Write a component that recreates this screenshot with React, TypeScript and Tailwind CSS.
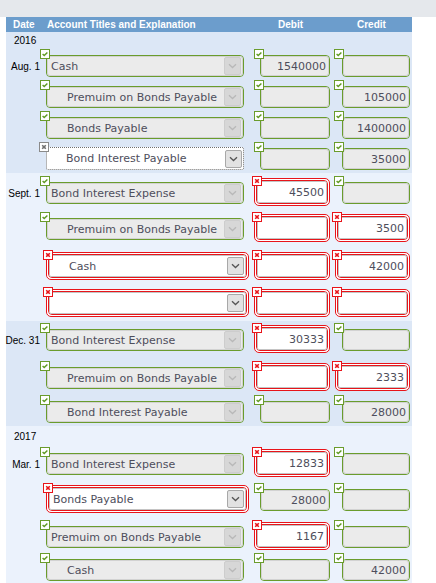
import React from 'react';

type St = 'g' | 'r' | 'n';
interface Row {
  h: string;
  date?: string;
  acct: string;
  indent: boolean;
  as: St;
  debit: string;
  ds: St;
  credit: string;
  cs: St;
}

const FONT_FIELD = "font-['DejaVu_Sans',Verdana,sans-serif]";

function CheckIcon({ pos }: { pos: string }) {
  return (
    <span className={`absolute z-10 block w-[10px] h-[10px] border border-[#6a9c2c] bg-white ${pos}`}>
      <svg width="8" height="8" viewBox="0 0 8 8" className="block">
        <path d="M1.6 4.1 L3.2 5.6 L6.4 2.4" fill="none" stroke="#5f9a22" strokeWidth="1.4" />
      </svg>
    </span>
  );
}

function XIcon({ pos, gray }: { pos: string; gray?: boolean }) {
  const c = gray ? '#707070' : '#e8141a';
  return (
    <span
      className={`absolute z-10 block w-[10px] h-[10px] border bg-white ${gray ? 'border-[#8a8a8a]' : 'border-[#e8141a]'} ${pos}`}
    >
      <svg width="8" height="8" viewBox="0 0 8 8" className="block">
        <path d="M2.2 2.2 L5.8 5.8 M5.8 2.2 L2.2 5.8" fill="none" stroke={c} strokeWidth="1.6" />
      </svg>
    </span>
  );
}

function Arrow({ active }: { active: boolean }) {
  return (
    <div
      className={
        active
          ? 'ml-auto mr-px h-[18px] w-[17px] shrink-0 flex items-center justify-center rounded-[2px] border border-[#a8a8a8] bg-[#e2e2e2]'
          : 'ml-auto mr-px h-[18px] w-[17px] shrink-0 flex items-center justify-center rounded-[2px] border border-[#cdcdcd] bg-[#d7d7d7]'
      }
    >
      <svg width="9" height="6" viewBox="0 0 9 6" className="block">
        <path d="M1 1.2 L4.5 4.5 L8 1.2" fill="none" stroke={active ? '#555555' : '#b8b8b8'} strokeWidth="1.3" />
      </svg>
    </div>
  );
}

function Content({
  text,
  num,
  indent,
  select,
  active,
}: {
  text: string;
  num: boolean;
  indent: boolean;
  select: boolean;
  active: boolean;
}) {
  if (num) {
    return (
      <span className={`ml-auto pr-[2px] text-[11px] leading-none text-[#4e4e5c] whitespace-nowrap ${FONT_FIELD}`}>
        {text}
      </span>
    );
  }
  return (
    <>
      <span
        className={`${indent ? 'pl-[19px]' : 'pl-[3px]'} text-[11px] leading-none text-[#4e4e5c] whitespace-nowrap ${FONT_FIELD}`}
      >
        {text}
      </span>
      {select && <Arrow active={active} />}
    </>
  );
}

function GreenField({ box, text, num, indent, select }: { box: string; text: string; num: boolean; indent: boolean; select: boolean }) {
  return (
    <div className={`${box} rounded-[4px] border border-[#6a9c2c]`}>
      <div className="h-full rounded-[3px] border border-[#d2d2d2] bg-[#ebebeb] flex items-center">
        <Content text={text} num={num} indent={indent} select={select} active={false} />
      </div>
    </div>
  );
}

function NeutralField({ box, text, indent }: { box: string; text: string; indent: boolean }) {
  return (
    <div className={`${box} rounded-[2px] border border-dotted border-[#6f6f6f] bg-white flex items-center`}>
      <Content text={text} num={false} indent={indent} select={true} active={true} />
    </div>
  );
}

function RedField({ box, text, num, indent, select }: { box: string; text: string; num: boolean; indent: boolean; select: boolean }) {
  return (
    <div className={`${box} rounded-[5px] border border-[#e8141a] bg-white p-px`}>
      <div className="h-full rounded-[4px] border border-[#e8141a]">
        <div className="h-full rounded-[2px] border border-[#c4c4c4] bg-white flex items-center">
          <Content text={text} num={num} indent={indent} select={select} active={true} />
        </div>
      </div>
    </div>
  );
}

function AcctCell({ r }: { r: Row }) {
  return (
    <div className="relative w-[212px] shrink-0">
      {r.as === 'g' && (
        <>
          <CheckIcon pos="left-0 top-0" />
          <GreenField box="ml-[6px] mt-[6px] w-[198px] h-[22px]" text={r.acct} num={false} indent={r.indent} select={true} />
        </>
      )}
      {r.as === 'n' && (
        <>
          <XIcon pos="left-[-1px] top-0" gray />
          <NeutralField box="ml-[6px] mt-[5px] w-[198px] h-[23px]" text={r.acct} indent={r.indent} />
        </>
      )}
      {r.as === 'r' && (
        <>
          <XIcon pos="left-[3px] top-0" />
          <RedField box="ml-[6px] mt-[2px] w-[203px] h-[28px]" text={r.acct} num={false} indent={r.indent} select={true} />
        </>
      )}
    </div>
  );
}

function DebitCell({ r }: { r: Row }) {
  return (
    <div className="relative w-[80px] shrink-0">
      {r.ds === 'r' ? (
        <>
          <XIcon pos="left-0 top-0" />
          <RedField box="ml-[2px] mt-[2px] w-[76px] h-[28px]" text={r.debit} num={true} indent={false} select={false} />
        </>
      ) : (
        <>
          <CheckIcon pos="left-[2px] top-0" />
          <GreenField box="ml-[8px] mt-[6px] w-[70px] h-[22px]" text={r.debit} num={true} indent={false} select={false} />
        </>
      )}
    </div>
  );
}

function CreditCell({ r }: { r: Row }) {
  return (
    <div className="relative w-[80px] shrink-0">
      {r.cs === 'r' ? (
        <>
          <XIcon pos="left-0 top-0" />
          <RedField box="ml-[3px] mt-[2px] w-[75px] h-[28px]" text={r.credit} num={true} indent={false} select={false} />
        </>
      ) : (
        <>
          <CheckIcon pos="left-[2px] top-0" />
          <GreenField box="ml-[10px] mt-[6px] w-[68px] h-[22px]" text={r.credit} num={true} indent={false} select={false} />
        </>
      )}
    </div>
  );
}

function RowView({ r }: { r: Row }) {
  return (
    <div className={`flex ${r.h}`}>
      <div className="w-[34px] shrink-0 pt-[6px]">
        <div className="h-[22px] flex items-center justify-end text-[10px] text-black whitespace-nowrap font-['Liberation_Sans',Arial,sans-serif]">
          {r.date ?? ''}
        </div>
      </div>
      <AcctCell r={r} />
      <DebitCell r={r} />
      <CreditCell r={r} />
    </div>
  );
}

const s1: Row[] = [
  { h: 'h-[31px]', date: 'Aug. 1', acct: 'Cash', indent: false, as: 'g', debit: '1540000', ds: 'g', credit: '', cs: 'g' },
  { h: 'h-[31px]', acct: 'Premuim on Bonds Payable', indent: true, as: 'g', debit: '', ds: 'g', credit: '105000', cs: 'g' },
  { h: 'h-[31px]', acct: 'Bonds Payable', indent: true, as: 'g', debit: '', ds: 'g', credit: '1400000', cs: 'g' },
  { h: 'h-[31px]', acct: 'Bond Interest Payable', indent: true, as: 'n', debit: '', ds: 'g', credit: '35000', cs: 'g' },
];

const s2: Row[] = [
  { h: 'h-[36px]', date: 'Sept. 1', acct: 'Bond Interest Expense', indent: false, as: 'g', debit: '45500', ds: 'r', credit: '', cs: 'g' },
  { h: 'h-[38px]', acct: 'Premuim on Bonds Payable', indent: true, as: 'g', debit: '', ds: 'r', credit: '3500', cs: 'r' },
  { h: 'h-[37px]', acct: 'Cash', indent: true, as: 'r', debit: '', ds: 'r', credit: '42000', cs: 'r' },
  { h: 'h-[34px]', acct: '', indent: false, as: 'r', debit: '', ds: 'r', credit: '', cs: 'r' },
];

const s3: Row[] = [
  { h: 'h-[38px]', date: 'Dec. 31', acct: 'Bond Interest Expense', indent: false, as: 'g', debit: '30333', ds: 'r', credit: '', cs: 'g' },
  { h: 'h-[34px]', acct: 'Premuim on Bonds Payable', indent: true, as: 'g', debit: '', ds: 'r', credit: '2333', cs: 'r' },
  { h: 'h-[31px]', acct: 'Bond Interest Payable', indent: true, as: 'g', debit: '', ds: 'g', credit: '28000', cs: 'g' },
];

const s4: Row[] = [
  { h: 'h-[36px]', date: 'Mar. 1', acct: 'Bond Interest Expense', indent: false, as: 'g', debit: '12833', ds: 'r', credit: '', cs: 'g' },
  { h: 'h-[37px]', acct: 'Bonds Payable', indent: false, as: 'r', debit: '28000', ds: 'g', credit: '', cs: 'g' },
  { h: 'h-[33px]', acct: 'Premuim on Bonds Payable', indent: false, as: 'g', debit: '1167', ds: 'r', credit: '', cs: 'g' },
  { h: 'h-[31px]', acct: 'Cash', indent: true, as: 'g', debit: '', ds: 'g', credit: '42000', cs: 'g' },
];

const yearCls = "pl-[8px] flex items-center text-[10px] text-black font-['Liberation_Sans',Arial,sans-serif]";

export default function App() {
  return (
    <div className="w-[436px] h-[583px] overflow-hidden bg-white">
      <div className="h-[17px] bg-[#e5e8ec]" />
      <div className="ml-[6px] w-[406px]">
        <div className="h-[15px] bg-[#6c9dcc] flex items-center text-white font-bold text-[10px] whitespace-nowrap font-['Liberation_Sans',Arial,sans-serif]">
          <span className="w-[34px] pl-[7px]">Date</span>
          <span className="w-[238px] pl-[7px]">Account Titles and Explanation</span>
          <span className="w-[79px]">Debit</span>
          <span>Credit</span>
        </div>
        <div className="bg-[#dce7f6]">
          <div className={`h-[17px] ${yearCls}`}>2016</div>
          {s1.map((r, i) => (
            <RowView key={i} r={r} />
          ))}
        </div>
        <div className="bg-[#ebf2fc] pt-[3px]">
          {s2.map((r, i) => (
            <RowView key={i} r={r} />
          ))}
        </div>
        <div className="bg-[#dce7f6] pt-[2px]">
          {s3.map((r, i) => (
            <RowView key={i} r={r} />
          ))}
        </div>
        <div className="bg-[#ebf2fc]">
          <div className={`h-[21px] ${yearCls}`}>2017</div>
          {s4.map((r, i) => (
            <RowView key={i} r={r} />
          ))}
        </div>
      </div>
    </div>
  );
}
